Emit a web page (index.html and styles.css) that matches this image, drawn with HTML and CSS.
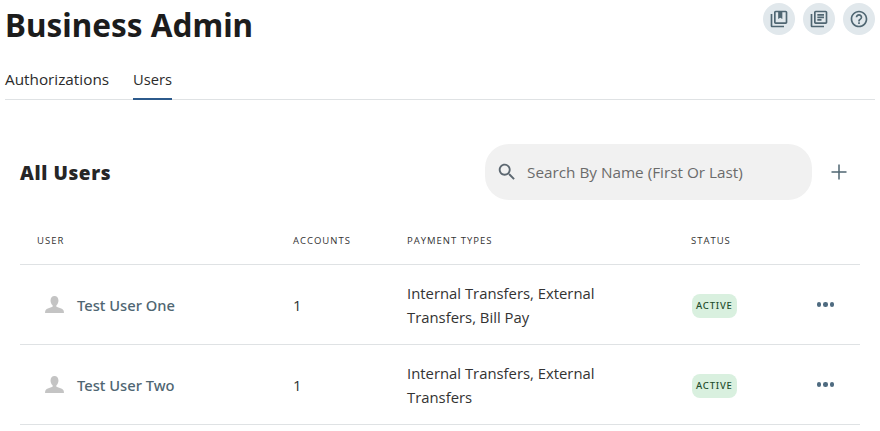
FILE: index.html
```html
<!DOCTYPE html>
<html lang="en">
<head>
    <meta charset="UTF-8">
    <title>Business Admin</title>
    <link rel="stylesheet" href="styles.css">
</head>
<body>
    <header class="page-header">
        <h1>Business Admin</h1>
        <div class="help-icons">
            <a class="round-btn" href="#">
                <svg viewBox="0 0 24 24" width="20" height="20"><path d="M4 6H2v14c0 1.1.9 2 2 2h14v-2H4V6zm16-4H8c-1.1 0-2 .9-2 2v12c0 1.1.9 2 2 2h12c1.1 0 2-.9 2-2V4c0-1.1-.9-2-2-2zm0 14H8V4h3v8l2.5-1.5L16 12V4h4v12z"/></svg>
            </a>
            <a class="round-btn" href="#">
                <svg viewBox="0 0 24 24" width="20" height="20"><path d="M4 6H2v14c0 1.1.9 2 2 2h14v-2H4V6zm16-4H8c-1.1 0-2 .9-2 2v12c0 1.1.9 2 2 2h12c1.1 0 2-.9 2-2V4c0-1.1-.9-2-2-2zm0 14H8V4h12v12zM10 9h8v2h-8V9zm0 3h5v2h-5v-2zm0-6h8v2h-8V6z"/></svg>
            </a>
            <a class="round-btn" href="#">
                <svg viewBox="0 0 24 24" width="20" height="20"><path d="M11 18h2v-2h-2v2zm1-16C6.480 2 2 6.480 2 12s4.480 10 10 10 10-4.480 10-10S17.520 2 12 2zm0 18c-4.410 0-8-3.590-8-8s3.590-8 8-8 8 3.590 8 8-3.590 8-8 8zm0-14c-2.210 0-4 1.790-4 4h2c0-1.100.9-2 2-2s2 .9 2 2c0 2-3 1.750-3 5h2c0-2.250 3-2.500 3-5 0-2.210-1.790-4-4-4z"/></svg>
            </a>
        </div>
    </header>

    <nav class="tabs">
        <a href="#">Authorizations</a>
        <a href="#" class="active">Users</a>
    </nav>

    <section class="users">
        <div class="users-head">
            <h2>All Users</h2>
            <div class="search-box">
                <svg viewBox="0 0 24 24" width="22" height="22"><path d="M15.500 14h-.79l-.28-.27C15.410 12.590 16 11.110 16 9.500 16 5.910 13.090 3 9.500 3S3 5.910 3 9.500 5.910 16 9.500 16c1.610 0 3.090-.59 4.230-1.570l.27.28v.79l5 4.990L20.490 19l-4.990-5zm-6 0C7.010 14 5 11.990 5 9.500S7.010 5 9.500 5 14 7.010 14 9.500 11.990 14 9.500 14z"/></svg>
                <span>Search By Name (First Or Last)</span>
            </div>
            <a class="add-btn" href="#">
                <svg viewBox="0 0 24 24" width="24" height="24"><path d="M19.500 12.750h-6.750v6.750h-1.500v-6.750H4.500v-1.500h6.750V4.500h1.500v6.750h6.750v1.500z"/></svg>
            </a>
        </div>

        <div class="row row-head">
            <div>User</div>
            <div>Accounts</div>
            <div>Payment Types</div>
            <div>Status</div>
            <div></div>
        </div>

        <div class="row">
            <div class="user-cell">
                <svg viewBox="0 0 20 18" width="19" height="17"><path d="M10 0c2.600 0 4.200 2 4.200 4.700 0 2.200-.9 4.100-2.200 5.100v1.700c2.800.9 6.400 1.900 7.500 3.600.4.700.5 1.800.5 2.900H0c0-1.100.1-2.200.5-2.900 1.100-1.700 4.700-2.700 7.500-3.600V9.800C6.700 8.800 5.800 6.900 5.800 4.700 5.800 2 7.400 0 10 0z"/></svg>
                <a href="#">Test User One</a>
            </div>
            <div>1</div>
            <div>Internal Transfers, External Transfers, Bill Pay</div>
            <div><span class="badge">Active</span></div>
            <div class="more"><i></i><i></i><i></i></div>
        </div>

        <div class="row">
            <div class="user-cell">
                <svg viewBox="0 0 20 18" width="19" height="17"><path d="M10 0c2.600 0 4.200 2 4.200 4.700 0 2.200-.9 4.100-2.200 5.100v1.700c2.800.9 6.400 1.900 7.500 3.600.4.700.5 1.800.5 2.900H0c0-1.100.1-2.200.5-2.900 1.100-1.700 4.700-2.700 7.500-3.600V9.800C6.700 8.800 5.800 6.900 5.800 4.700 5.800 2 7.400 0 10 0z"/></svg>
                <a href="#">Test User Two</a>
            </div>
            <div>1</div>
            <div>Internal Transfers, External Transfers</div>
            <div><span class="badge">Active</span></div>
            <div class="more"><i></i><i></i><i></i></div>
        </div>
    </section>
</body>
</html>
```

FILE: styles.css
```css
* {
    box-sizing: border-box;
    margin: 0;
    padding: 0;
}
html, body {
    height: 431px;
    overflow: hidden;
}
body {
    font-family: "Open Sans", "Noto Sans", sans-serif;
    background-color: #fff;
    color: #212529;
    padding: 0 5px;
}
a {
    text-decoration: none;
    color: inherit;
}
.page-header {
    display: flex;
    justify-content: space-between;
    align-items: flex-start;
    height: 66px;
}
.page-header h1 {
    font-family: "Noto Sans", sans-serif;
    font-size: 31.500px;
    font-weight: 700;
    line-height: 50px;
    color: #1c1c1c;
}
.help-icons {
    display: flex;
    gap: 8px;
    padding-top: 3px;
}
.round-btn {
    width: 32px;
    height: 32px;
    border-radius: 50%;
    background: #e1e8ec;
    display: flex;
    align-items: center;
    justify-content: center;
}
.round-btn svg {
    fill: #4f6672;
}
.tabs {
    display: flex;
    gap: 24px;
    height: 34px;
    border-bottom: 1px solid #dfe2e4;
}
.tabs a {
    font-size: 15.300px;
    line-height: 27px;
    height: 34px;
    color: #2b2b2b;
}
.tabs a.active {
    font-size: 14.700px;
    border-bottom: 2px solid #2c5a8c;
}
.users {
    padding: 0 15px;
}
.users-head {
    display: flex;
    align-items: center;
    height: 56px;
    margin-top: 44px;
}
.users-head h2 {
    font-size: 19px;
    font-weight: 800;
    letter-spacing: 0.6px;
    padding-top: 2px;
    color: #262626;
    flex: 1;
}
.search-box {
    width: 327px;
    height: 56px;
    border-radius: 24px;
    background: #f1f1f1;
    display: flex;
    align-items: center;
    padding-left: 11px;
    gap: 9px;
    font-size: 15.300px;
    color: #6b6b6b;
}
.search-box svg {
    fill: #5c6770;
}
.add-btn {
    width: 24px;
    height: 24px;
    margin: 0 9px 0 15px;
    display: block;
}
.add-btn svg {
    fill: #4f6672;
    display: block;
}
.row {
    display: grid;
    grid-template-columns: 256px 114px 284px 118px 1fr;
    align-items: center;
    height: 80px;
    border-bottom: 1px solid #dfe2e4;
    font-size: 14.850px;
    line-height: 24px;
    color: #333;
}
.row > div {
    padding: 0 17px;
}
.row-head {
    height: 50px;
    margin-top: 15px;
    padding-top: 2px;
    font-size: 9.500px;
    letter-spacing: 1px;
    text-transform: uppercase;
    color: #333;
}
.user-cell {
    display: flex;
    align-items: center;
    gap: 13px;
    padding-left: 25px !important;
}
.user-cell svg {
    fill: #c4c4c4;
}
.user-cell a {
    font-family: "Noto Sans", sans-serif;
    font-size: 14.700px;
    font-weight: 500;
    color: #4f6672;
}
.badge {
    display: inline-block;
    margin-left: 1px;
    padding: 0 4px;
    border-radius: 8px;
    background: #d9f0df;
    color: #1f4d2c;
    font-family: "Noto Sans", sans-serif;
    font-size: 9.500px;
    letter-spacing: 0.8px;
    line-height: 24px;
    text-transform: uppercase;
    font-weight: 500;
}
.more {
    display: flex;
    gap: 2px;
    justify-content: flex-end;
    padding-right: 26px !important;
}
.more i {
    width: 4.500px;
    height: 4.500px;
    border-radius: 50%;
    background: #4f6b80;
}
```
